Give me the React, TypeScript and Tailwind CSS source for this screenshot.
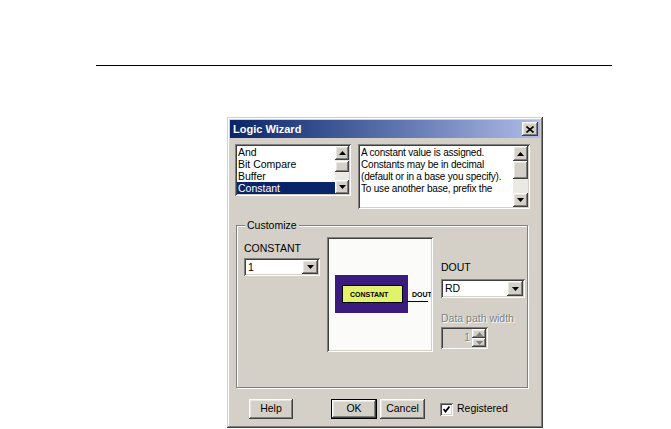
const raised =
  "shadow-[inset_-1px_-1px_0_#404040,inset_1px_1px_0_#ffffff,inset_-2px_-2px_0_#808080,inset_2px_2px_0_#e8e6e0]";
const sunken =
  "shadow-[inset_1px_1px_0_#808080,inset_-1px_-1px_0_#ffffff,inset_2px_2px_0_#404040,inset_-2px_-2px_0_#d4d0c8]";

function Arrow({ up = false, color = "#000" }: { up?: boolean; color?: string }) {
  return (
    <svg width="7" height="4" viewBox="0 0 7 4">
      <path d={up ? "M3.5 0 L7 4 L0 4 Z" : "M0 0 L7 0 L3.5 4 Z"} fill={color} />
    </svg>
  );
}

function ScrollBtn({ up = false, h = "h-[14px]" }: { up?: boolean; h?: string }) {
  return (
    <div className={`${h} w-full bg-[#d4d0c8] ${raised} flex items-center justify-center`}>
      <Arrow up={up} />
    </div>
  );
}

function Combo({ value, w, h }: { value: string; w: string; h: string }) {
  return (
    <div className={`${w} ${h} bg-white ${sunken} p-[2px] flex`}>
      <div className="flex-1 pl-[2px] leading-none flex items-center">{value}</div>
      <div className={`w-[16px] bg-[#d4d0c8] ${raised} flex items-center justify-center`}>
        <Arrow />
      </div>
    </div>
  );
}

function Button({ label, isDefault = false, w }: { label: string; isDefault?: boolean; w: string }) {
  return (
    <div
      className={`${w} h-[20px] bg-[#d4d0c8] flex items-center justify-center ${
        isDefault ? "border border-black" : ""
      } ${raised}`}
    >
      {label}
    </div>
  );
}

export default function App() {
  return (
    <div className="w-[671px] h-[429px] bg-white overflow-hidden pt-[65px] font-['Liberation_Sans',Arial,sans-serif] text-[10.5px] text-black">
      <div className="ml-[96px] w-[516px] h-px bg-black" />

      <div className="ml-[227px] mt-[51px] w-[316px] h-[311px] bg-[#d4d0c8] p-[3px] shadow-[inset_-1px_-1px_0_#404040,inset_1px_1px_0_#d4d0c8,inset_-2px_-2px_0_#808080,inset_2px_2px_0_#ffffff]">
        {/* title bar */}
        <div className="h-[18px] bg-linear-to-r from-[#0a246a] to-[#b0bce8] flex items-center justify-between pl-[3px] pr-[2px]">
          <span className="text-white font-bold text-[11px]">Logic Wizard</span>
          <div className={`w-[16px] h-[14px] bg-[#d4d0c8] ${raised} flex items-center justify-center`}>
            <svg width="8" height="7" viewBox="0 0 8 7">
              <path d="M0.5 0.5 L7.5 6.5 M7.5 0.5 L0.5 6.5" stroke="#000" strokeWidth="1.6" />
            </svg>
          </div>
        </div>

        {/* type list + description */}
        <div className="mt-[6px] ml-[5px] flex gap-[7px]">
          <div className={`w-[116px] h-[52px] bg-white ${sunken} p-[2px] flex`}>
            <div className="flex-1 leading-[12px]">
              <div className="pl-[1px]">And</div>
              <div className="pl-[1px]">Bit Compare</div>
              <div className="pl-[1px]">Buffer</div>
              <div className="pl-[1px] bg-[#0a246a] text-white">Constant</div>
            </div>
            <div className="w-[14px] flex flex-col bg-[#ebe9e3]">
              <ScrollBtn up h="h-[14px]" />
              <div className={`h-[11px] mt-[1px] bg-[#d4d0c8] ${raised}`} />
              <div className="flex-1" />
              <ScrollBtn h="h-[14px]" />
            </div>
          </div>

          <div className={`w-[172px] h-[65px] bg-white ${sunken} p-[2px] flex`}>
            <div className="flex-1 min-w-0 pl-[1px] pt-[1px] leading-[12px] text-[10px] tracking-[-0.2px] whitespace-nowrap">
              <div>A constant value is assigned.</div>
              <div>Constants may be in decimal</div>
              <div>(default or in a base you specify).</div>
              <div>To use another base, prefix the</div>
            </div>
            <div className="w-[15px] flex flex-col bg-[#ebe9e3]">
              <ScrollBtn up h="h-[15px]" />
              <div className={`h-[18px] bg-[#d4d0c8] ${raised}`} />
              <div className="flex-1" />
              <ScrollBtn h="h-[14px]" />
            </div>
          </div>
        </div>

        {/* customize group */}
        <fieldset className="mt-[10px] ml-[6px] w-[292px] h-[169px] border border-[#808080] shadow-[1px_1px_0_#ffffff,inset_1px_1px_0_#ffffff]">
          <legend className="ml-[8px] px-[2px] leading-[13px] bg-[#d4d0c8]">Customize</legend>
          <div className="flex items-start pl-[7px]">
            <div className="mt-[10px] w-[76px]">
              <div className="leading-[13px]">CONSTANT</div>
              <div className="mt-[3px]">
                <Combo value="1" w="w-[76px]" h="h-[18px]" />
              </div>
            </div>

            <div className={`ml-[7px] mt-[5px] w-[106px] h-[115px] bg-[#fbfbfa] ${sunken} p-[2px]`}>
              <svg width="102" height="111" viewBox="0 0 102 111">
                <rect x="6" y="36" width="73" height="38" fill="#3b1c7e" />
                <rect x="13.5" y="46.5" width="60" height="17" fill="#e2f26a" stroke="#000" strokeWidth="1" />
                <text x="21" y="58" fontSize="7" fontWeight="bold" fontFamily="Liberation Sans, Arial, sans-serif" fill="#000">
                  CONSTANT
                </text>
                <line x1="78" y1="62.5" x2="99" y2="62.5" stroke="#000" strokeWidth="1" />
                <text x="83" y="58" fontSize="7" fontWeight="bold" fontFamily="Liberation Sans, Arial, sans-serif" fill="#000">
                  DOUT
                </text>
              </svg>
            </div>

            <div className="ml-[8px] mt-[29px]">
              <div className="leading-[13px]">DOUT</div>
              <div className="mt-[5px]">
                <Combo value="RD" w="w-[84px]" h="h-[19px]" />
              </div>
              <div className="mt-[14px] leading-[13px] text-[#808080] [text-shadow:1px_1px_0_#ffffff]">
                Data path width
              </div>
              <div className={`mt-[2px] w-[47px] h-[22px] ${sunken} p-[2px] flex`}>
                <div className="flex-1 flex items-center justify-end pr-[2px] text-[#808080] [text-shadow:1px_1px_0_#ffffff]">
                  1
                </div>
                <div className="w-[14px] flex flex-col">
                  <div className={`flex-1 bg-[#d4d0c8] ${raised} flex items-center justify-center`}>
                    <Arrow up color="#808080" />
                  </div>
                  <div className={`flex-1 bg-[#d4d0c8] ${raised} flex items-center justify-center`}>
                    <Arrow color="#808080" />
                  </div>
                </div>
              </div>
            </div>
          </div>
        </fieldset>

        {/* buttons */}
        <div className="mt-[11px] ml-[19px] flex items-center">
          <Button label="Help" w="w-[44px]" />
          <div className="ml-[38px]">
            <Button label="OK" isDefault w="w-[46px]" />
          </div>
          <div className="ml-[3px]">
            <Button label="Cancel" w="w-[45px]" />
          </div>
          <div className={`ml-[15px] w-[13px] h-[13px] bg-white ${sunken} flex items-center justify-center`}>
            <svg width="7" height="7" viewBox="0 0 7 7">
              <path d="M0.5 3 L2.5 5.5 L6.5 0.5" stroke="#000" strokeWidth="1.8" fill="none" />
            </svg>
          </div>
          <span className="ml-[4px]">Registered</span>
        </div>
      </div>
    </div>
  );
}
